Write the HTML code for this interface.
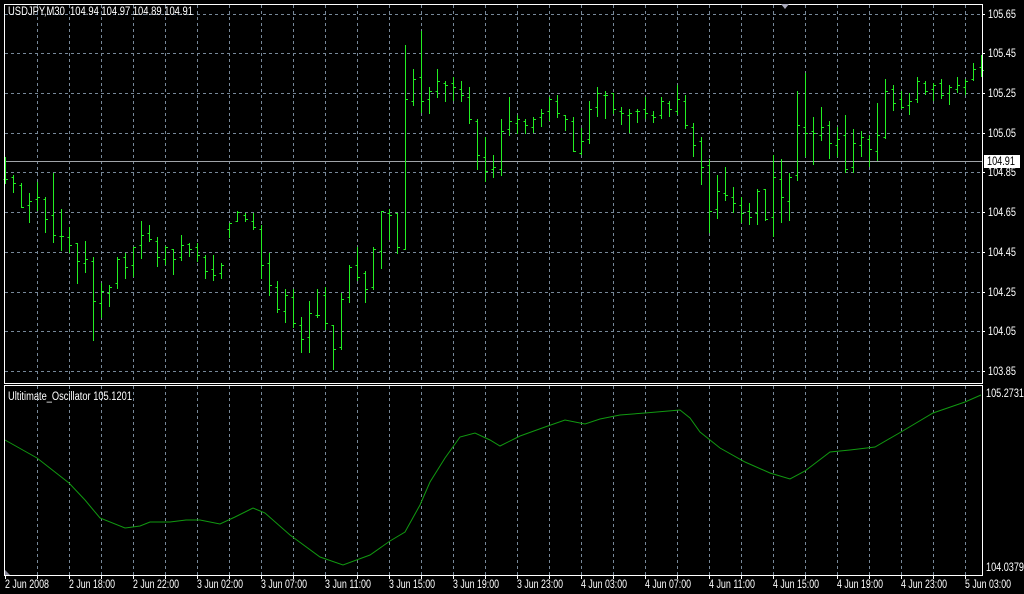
<!DOCTYPE html>
<html><head><meta charset="utf-8">
<style>
html,body{margin:0;padding:0;background:#000;width:1024px;height:594px;overflow:hidden}
svg{display:block}
text{font-family:"Liberation Sans",sans-serif;font-size:11.5px;fill:#fff}
</style></head>
<body>
<svg id="s" width="1024" height="594" viewBox="0 0 1024 594" xmlns="http://www.w3.org/2000/svg">
<rect width="1024" height="594" fill="#000"/>
<g id="grid" stroke="#778899" stroke-width="1" stroke-dasharray="3,3" shape-rendering="crispEdges"></g>
<line x1="5" y1="161.5" x2="982" y2="161.5" stroke="#a0a4a8" stroke-width="1" shape-rendering="crispEdges"/>
<g id="bars" stroke="#22ee22" stroke-width="1" shape-rendering="crispEdges"></g>
<polyline id="osc" fill="none" stroke="#119911" stroke-width="1"/>
<g stroke="#fff" stroke-width="1" fill="none" shape-rendering="crispEdges">
<rect x="4.5" y="4.5" width="978" height="379"/>
<rect x="4.5" y="385.5" width="978" height="190"/>
</g>
<polygon points="781,4 789,4 785,9" fill="#aab"/>
<polygon points="5,570 5,575 10,575" fill="#889"/>
<g id="ticks" stroke="#fff" shape-rendering="crispEdges"></g>
<text x="8" y="15" textLength="185" lengthAdjust="spacingAndGlyphs" xml:space="preserve">USDJPY,M30  104.94 104.97 104.89 104.91</text>
<text x="8" y="400" textLength="124" lengthAdjust="spacingAndGlyphs">Ultitimate_Oscillator 105.1201</text>
<g id="plab">
<text x="988" y="18" textLength="28" lengthAdjust="spacingAndGlyphs">105.65</text>
<text x="988" y="57" textLength="28" lengthAdjust="spacingAndGlyphs">105.45</text>
<text x="988" y="97" textLength="28" lengthAdjust="spacingAndGlyphs">105.25</text>
<text x="988" y="137" textLength="28" lengthAdjust="spacingAndGlyphs">105.05</text>
<text x="988" y="176" textLength="28" lengthAdjust="spacingAndGlyphs">104.85</text>
<text x="988" y="216" textLength="28" lengthAdjust="spacingAndGlyphs">104.65</text>
<text x="988" y="256" textLength="28" lengthAdjust="spacingAndGlyphs">104.45</text>
<text x="988" y="296" textLength="28" lengthAdjust="spacingAndGlyphs">104.25</text>
<text x="988" y="335" textLength="28" lengthAdjust="spacingAndGlyphs">104.05</text>
<text x="988" y="375" textLength="28" lengthAdjust="spacingAndGlyphs">103.85</text>
<text x="986" y="397" textLength="38" lengthAdjust="spacingAndGlyphs">105.2731</text>
<text x="986" y="571" textLength="38" lengthAdjust="spacingAndGlyphs">104.0379</text>
</g>
<rect x="984" y="155" width="36" height="13" fill="#fff"/>
<text x="987" y="165" style="fill:#000" textLength="28" lengthAdjust="spacingAndGlyphs">104.91</text>
<g id="tl">
<text x="5" y="588" textLength="44" lengthAdjust="spacingAndGlyphs">2 Jun 2008</text>
<text x="69" y="588" textLength="46" lengthAdjust="spacingAndGlyphs">2 Jun 18:00</text>
<text x="133" y="588" textLength="46" lengthAdjust="spacingAndGlyphs">2 Jun 22:00</text>
<text x="197" y="588" textLength="46" lengthAdjust="spacingAndGlyphs">3 Jun 02:00</text>
<text x="261" y="588" textLength="46" lengthAdjust="spacingAndGlyphs">3 Jun 07:00</text>
<text x="325" y="588" textLength="46" lengthAdjust="spacingAndGlyphs">3 Jun 11:00</text>
<text x="389" y="588" textLength="46" lengthAdjust="spacingAndGlyphs">3 Jun 15:00</text>
<text x="453" y="588" textLength="46" lengthAdjust="spacingAndGlyphs">3 Jun 19:00</text>
<text x="517" y="588" textLength="46" lengthAdjust="spacingAndGlyphs">3 Jun 23:00</text>
<text x="581" y="588" textLength="46" lengthAdjust="spacingAndGlyphs">4 Jun 03:00</text>
<text x="645" y="588" textLength="46" lengthAdjust="spacingAndGlyphs">4 Jun 07:00</text>
<text x="709" y="588" textLength="46" lengthAdjust="spacingAndGlyphs">4 Jun 11:00</text>
<text x="773" y="588" textLength="46" lengthAdjust="spacingAndGlyphs">4 Jun 15:00</text>
<text x="837" y="588" textLength="46" lengthAdjust="spacingAndGlyphs">4 Jun 19:00</text>
<text x="901" y="588" textLength="46" lengthAdjust="spacingAndGlyphs">4 Jun 23:00</text>
<text x="965" y="588" textLength="46" lengthAdjust="spacingAndGlyphs">5 Jun 03:00</text>
</g>
</svg>
<script>
var NS="http://www.w3.org/2000/svg";
function L(g,x1,y1,x2,y2){var l=document.createElementNS(NS,"line");l.setAttribute("x1",x1);l.setAttribute("y1",y1);l.setAttribute("x2",x2);l.setAttribute("y2",y2);document.getElementById(g).appendChild(l);}
for(var x=37;x<982;x+=32){L("grid",x+.5,5,x+.5,383);L("grid",x+.5,386,x+.5,575);L("ticks",x+.5,575,x+.5,579);}
L("ticks",5.5,575,5.5,579);
var hy=[14,53,93,133,172,212,252,292,331,371];
hy.forEach(function(y){L("grid",5,y+.5,982,y+.5);L("ticks",982,y+.5,985,y+.5);});
var segs=[
[150,0,[[20,100,88,88],[75,125,80,100],[100,172,104,172],[130,215,166,154],[97,180,148,142],[140,245,146,208],[70,275,196,256],[178,300,258,258],[230,305,262,286],[280,400,280,334],[273,365,340,328],[322,570,334,454],[400,502,460,424],[405,467,430,412],[322,413,400,326],[310,383,322,350],[292,377,346,292],[213,323,286,256],[226,273,250,266],[262,347,274,322],[288,341,328,292],[297,371,298,326],[256,329,322,286],[280,318,282,298],[280,333,292,316],[315,383,320,364],[315,389,356,376],[340,383,370,346],[218,260,238,218],[184,213,213,186],[189,213,196,208]]],
[20,31,[[580,628,604,622],[615,775,628,736],[700,826,730,796],[784,875,802,868],[808,905,874,826],[808,922,832,910],[892,995,916,958],[844,995,952,880],[808,892,886,886],[802,928,826,910],[916,1048,916,988],[820,988,982,838],[736,845,832,740],[682,780,736,772],[754,845,760,808],[682,808,802,688],[574,743,694,574],[568,658,580,586],[580,700,580,682],[75,688,688,238],[148,256,244,178],[34,277,172,244],[202,280,238,214],[148,232,214,184],[184,244,190,196],[172,240,190,202],[184,244,208,226],[202,310,232,298],[298,448,304,406],[352,484,412,454]]],
[60,61,[[285,352,328,322],[178,346,328,214],[112,226,208,184],[166,220,190,178],[178,219,184,196],[172,215,202,178],[148,197,172,160],[112,179,154,118],[106,172,124,160],[166,209,166,178],[172,274,184,274],[205,283,280,244],[124,250,238,148],[82,167,142,100],[94,173,106,106],[98,160,100,148],[142,191,154,160],[148,215,166,160],[148,185,154,154],[112,173,148,160],[154,185,166,172],[112,173,166,124],[124,167,130,148],[76,161,154,118],[106,203,124,196],[190,287,202,256],[232,371,244,322],[298,517,316,454],[346,473,448,394],[322,419,400,406],[382,455,412,430]]],
[50,92,[[442,515,466,490],[460,521,484,502],[418,521,490,424],[418,509,418,508],[316,557,502,382],[328,515,388,442],[370,509,454,382],[124,389,376,226],[70,317,232,250],[202,341,244,250],[172,269,256,232],[214,323,226,280],[232,317,286,268],[196,365,256,356],[238,365,352,280],[244,317,286,262],[256,349,268,298],[160,329,304,256],[88,263,262,124],[106,179,118,160],[124,173,148,172],[130,191,166,154],[82,155,148,94],[94,131,100,124],[100,151,118,106],[88,143,100,136],[106,161,130,112],[82,125,118,106],[88,131,112,94],[40,89,88,58],[16,77,52,60]]]
];
segs.forEach(function(s){var y0=s[0],k0=s[1];s[2].forEach(function(b,i){
 var k=k0+i,x=5+8*k+.5,f=function(z){return Math.round(y0+z/3)+.5;};
 L("bars",x,f(b[0])-.5,x,f(b[1])+.5);
 L("bars",x-2,f(b[2]),x,f(b[2]));
 L("bars",x,f(b[3]),x+2.5,f(b[3]));
});});
var pts=[[5,440],[37,458],[69,483],[85,500],[100,518],[125,528],[140,526],[150,522],[170,522],[186,520],[200,520],[220,524],[235,517],[253,508],[265,513],[290,535],[320,557],[343,565],[370,555],[390,541],[405,532],[420,505],[430,482],[445,458],[460,437],[475,433],[490,440],[500,446],[520,436],[545,427],[565,420],[585,424],[600,419],[620,415],[645,413],[680,410],[690,418],[700,432],[720,448],[745,462],[770,473],[790,479],[805,471],[830,452],[850,450],[875,447],[901,432],[933,413],[965,402],[981,395]];
document.getElementById("osc").setAttribute("points",pts.map(function(p){return p.join(",");}).join(" "));
</script>
</body></html>
